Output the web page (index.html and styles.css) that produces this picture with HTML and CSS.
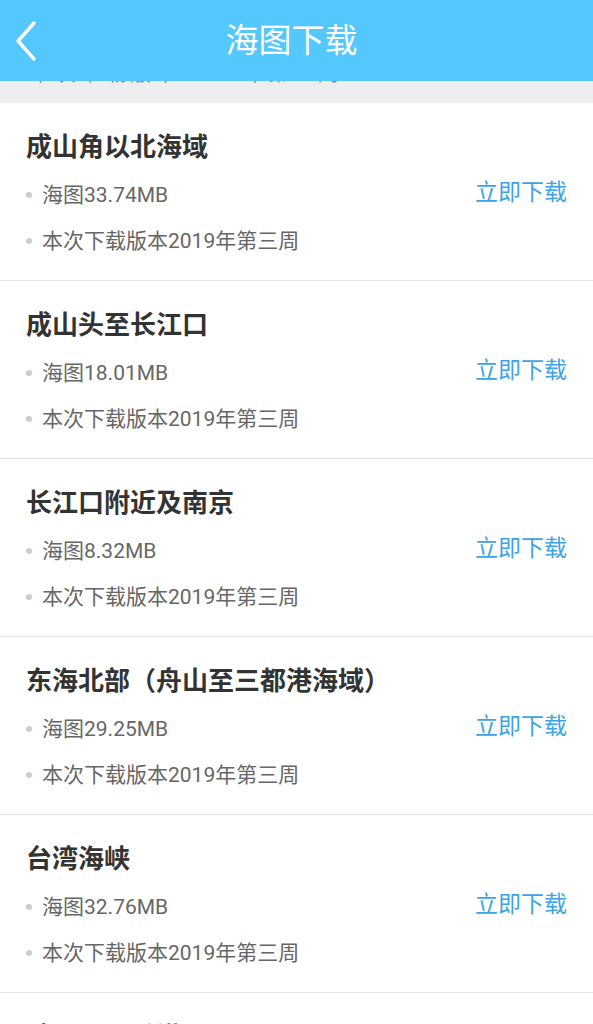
FILE: index.html
```html
<!DOCTYPE html>
<html lang="zh-CN">
<head>
<meta charset="utf-8">
<title>海图下载</title>
<link rel="stylesheet" href="styles.css">
</head>
<body>
<div class="page">
  <header class="topbar">
    <span class="back">
      <svg width="24" height="42" viewBox="0 0 24 42"><path d="M20 3 L4 21 L20 39" fill="none" stroke="#fff" stroke-width="3.4" stroke-linecap="round" stroke-linejoin="round"/></svg>
    </span>
    <h1 class="title">海图下载</h1>
  </header>
  <div class="band"><div class="clip"><span>本次下载版本2019年第三周</span></div></div>
  <ul class="list">
    <li class="item">
      <div class="info">
        <div class="name">成山角以北海域</div>
        <div class="meta"><i class="dot"></i>海图33.74MB</div>
        <div class="meta"><i class="dot"></i>本次下载版本2019年第三周</div>
      </div>
      <a class="dl">立即下载</a>
    </li>
    <li class="item">
      <div class="info">
        <div class="name">成山头至长江口</div>
        <div class="meta"><i class="dot"></i>海图18.01MB</div>
        <div class="meta"><i class="dot"></i>本次下载版本2019年第三周</div>
      </div>
      <a class="dl">立即下载</a>
    </li>
    <li class="item">
      <div class="info">
        <div class="name">长江口附近及南京</div>
        <div class="meta"><i class="dot"></i>海图8.32MB</div>
        <div class="meta"><i class="dot"></i>本次下载版本2019年第三周</div>
      </div>
      <a class="dl">立即下载</a>
    </li>
    <li class="item">
      <div class="info">
        <div class="name">东海北部（舟山至三都港海域）</div>
        <div class="meta"><i class="dot"></i>海图29.25MB</div>
        <div class="meta"><i class="dot"></i>本次下载版本2019年第三周</div>
      </div>
      <a class="dl">立即下载</a>
    </li>
    <li class="item">
      <div class="info">
        <div class="name">台湾海峡</div>
        <div class="meta"><i class="dot"></i>海图32.76MB</div>
        <div class="meta"><i class="dot"></i>本次下载版本2019年第三周</div>
      </div>
      <a class="dl">立即下载</a>
    </li>
    <li class="item">
      <div class="info">
        <div class="name">珠江口及香港</div>
        <div class="meta"><i class="dot"></i>海图21.40MB</div>
        <div class="meta"><i class="dot"></i>本次下载版本2019年第三周</div>
      </div>
      <a class="dl">立即下载</a>
    </li>
  </ul>
</div>
</body>
</html>
```
FILE: styles.css
```css
* { box-sizing: border-box; margin: 0; padding: 0; }
html, body { background: #fff; }
body {
  width: 593px;
  height: 1024px;
  overflow: hidden;
  font-family: Roboto, "Noto Sans CJK SC", sans-serif;
}
.page { width: 593px; }
.topbar {
  height: 81px;
  background: #54c7fc;
  display: flex;
  align-items: center;
  justify-content: center;
  padding-right: 10px;
  position: relative;
}
.back {
  position: absolute;
  left: 14px;
  top: 20px;
  width: 24px;
  height: 42px;
  display: block;
}
.back svg { display: block; }
.title {
  color: #fff;
  font-size: 33px;
  font-weight: 400;
  line-height: 40px;
}
.band {
  height: 22px;
  background: #eeeeee;
}
.clip {
  height: 3px;
  overflow: hidden;
  padding-left: 30px;
}
.clip span {
  display: block;
  font-size: 21px;
  color: #888;
  line-height: 21px;
  margin-top: -18px;
  letter-spacing: 4px;
}
.list { list-style: none; }
.item {
  height: 178px;
  border-bottom: 1px solid #e3e3e3;
  display: flex;
  justify-content: space-between;
  padding: 26px 26px 0 26px;
}
.name {
  font-size: 26px;
  font-weight: 700;
  color: #333;
  line-height: 36px;
  margin-bottom: 7px;
}
.meta {
  font-size: 21px;
  color: #666;
  line-height: 46px;
  display: flex;
  align-items: center;
}
.dot {
  width: 6px;
  height: 6px;
  border-radius: 50%;
  background: #cccccc;
  margin: 0 10px 0 0;
  flex: none;
}
.dl {
  font-size: 23px;
  color: #3ca3e6;
  line-height: 30px;
  margin-top: 49px;
  white-space: nowrap;
}
```
